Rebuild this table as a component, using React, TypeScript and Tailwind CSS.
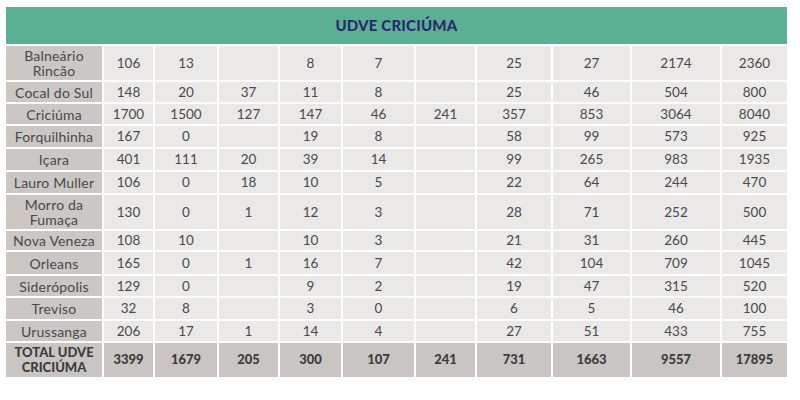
import React from "react";

const rows: { name: string; vals: string[] }[] = [
  { name: "Balneário Rincão", vals: ["106", "13", "", "8", "7", "", "25", "27", "2174", "2360"] },
  { name: "Cocal do Sul", vals: ["148", "20", "37", "11", "8", "", "25", "46", "504", "800"] },
  { name: "Criciúma", vals: ["1700", "1500", "127", "147", "46", "241", "357", "853", "3064", "8040"] },
  { name: "Forquilhinha", vals: ["167", "0", "", "19", "8", "", "58", "99", "573", "925"] },
  { name: "Içara", vals: ["401", "111", "20", "39", "14", "", "99", "265", "983", "1935"] },
  { name: "Lauro Muller", vals: ["106", "0", "18", "10", "5", "", "22", "64", "244", "470"] },
  { name: "Morro da Fumaça", vals: ["130", "0", "1", "12", "3", "", "28", "71", "252", "500"] },
  { name: "Nova Veneza", vals: ["108", "10", "", "10", "3", "", "21", "31", "260", "445"] },
  { name: "Orleans", vals: ["165", "0", "1", "16", "7", "", "42", "104", "709", "1045"] },
  { name: "Siderópolis", vals: ["129", "0", "", "9", "2", "", "19", "47", "315", "520"] },
  { name: "Treviso", vals: ["32", "8", "", "3", "0", "", "6", "5", "46", "100"] },
  { name: "Urussanga", vals: ["206", "17", "1", "14", "4", "", "27", "51", "433", "755"] },
];

const totals = ["3399", "1679", "205", "300", "107", "241", "731", "1663", "9557", "17895"];

const nameStyle: Record<string, string> = {
  "Balneário Rincão": "w-[72px]",
  "Morro da Fumaça": "w-[72px]",
};

export default function App() {
  return (
    <div className="w-[800px] h-[400px] bg-white pt-[7px] pl-[6px]" style={{ fontFamily: "Lato, 'Noto Sans', sans-serif" }}>
      <div className="grid w-[782px] gap-[2px] grid-cols-[96px_49px_62px_59px_61px_71px_59px_74px_77px_88px_65px] grid-rows-[37px_34px_20px_20px_21px_21px_21px_34px_19px_22px_20px_21px_20px_34px]">
        <div className="col-span-11 bg-[#5bb094] flex items-center justify-center text-[15px] font-black text-[#2b2a6e] tracking-[0.2px]">
          UDVE CRICIÚMA
        </div>
        {rows.map((r) => (
          <React.Fragment key={r.name}>
            <div className="bg-[#cbc7c5] flex items-center justify-center text-center text-[14px] leading-[15px] text-[#4a4a4a] tracking-[0.2px]">
              <span className={nameStyle[r.name] ?? ""}>{r.name}</span>
            </div>
            {r.vals.map((v, i) => (
              <div key={i} className="bg-[#ebe9e8] flex items-center justify-center text-[13.5px] text-[#4a4a4a]">
                {v}
              </div>
            ))}
          </React.Fragment>
        ))}
        <div className="bg-[#c9c5c3] flex items-center justify-center text-center text-[13px] leading-[15px] font-black text-[#3d3d3d]">
          <span>
            TOTAL UDVE
            <br />
            CRICIÚMA
          </span>
        </div>
        {totals.map((v, i) => (
          <div key={i} className="bg-[#c9c5c3] flex items-center justify-center text-[13px] font-black text-[#3d3d3d]">
            {v}
          </div>
        ))}
      </div>
    </div>
  );
}
